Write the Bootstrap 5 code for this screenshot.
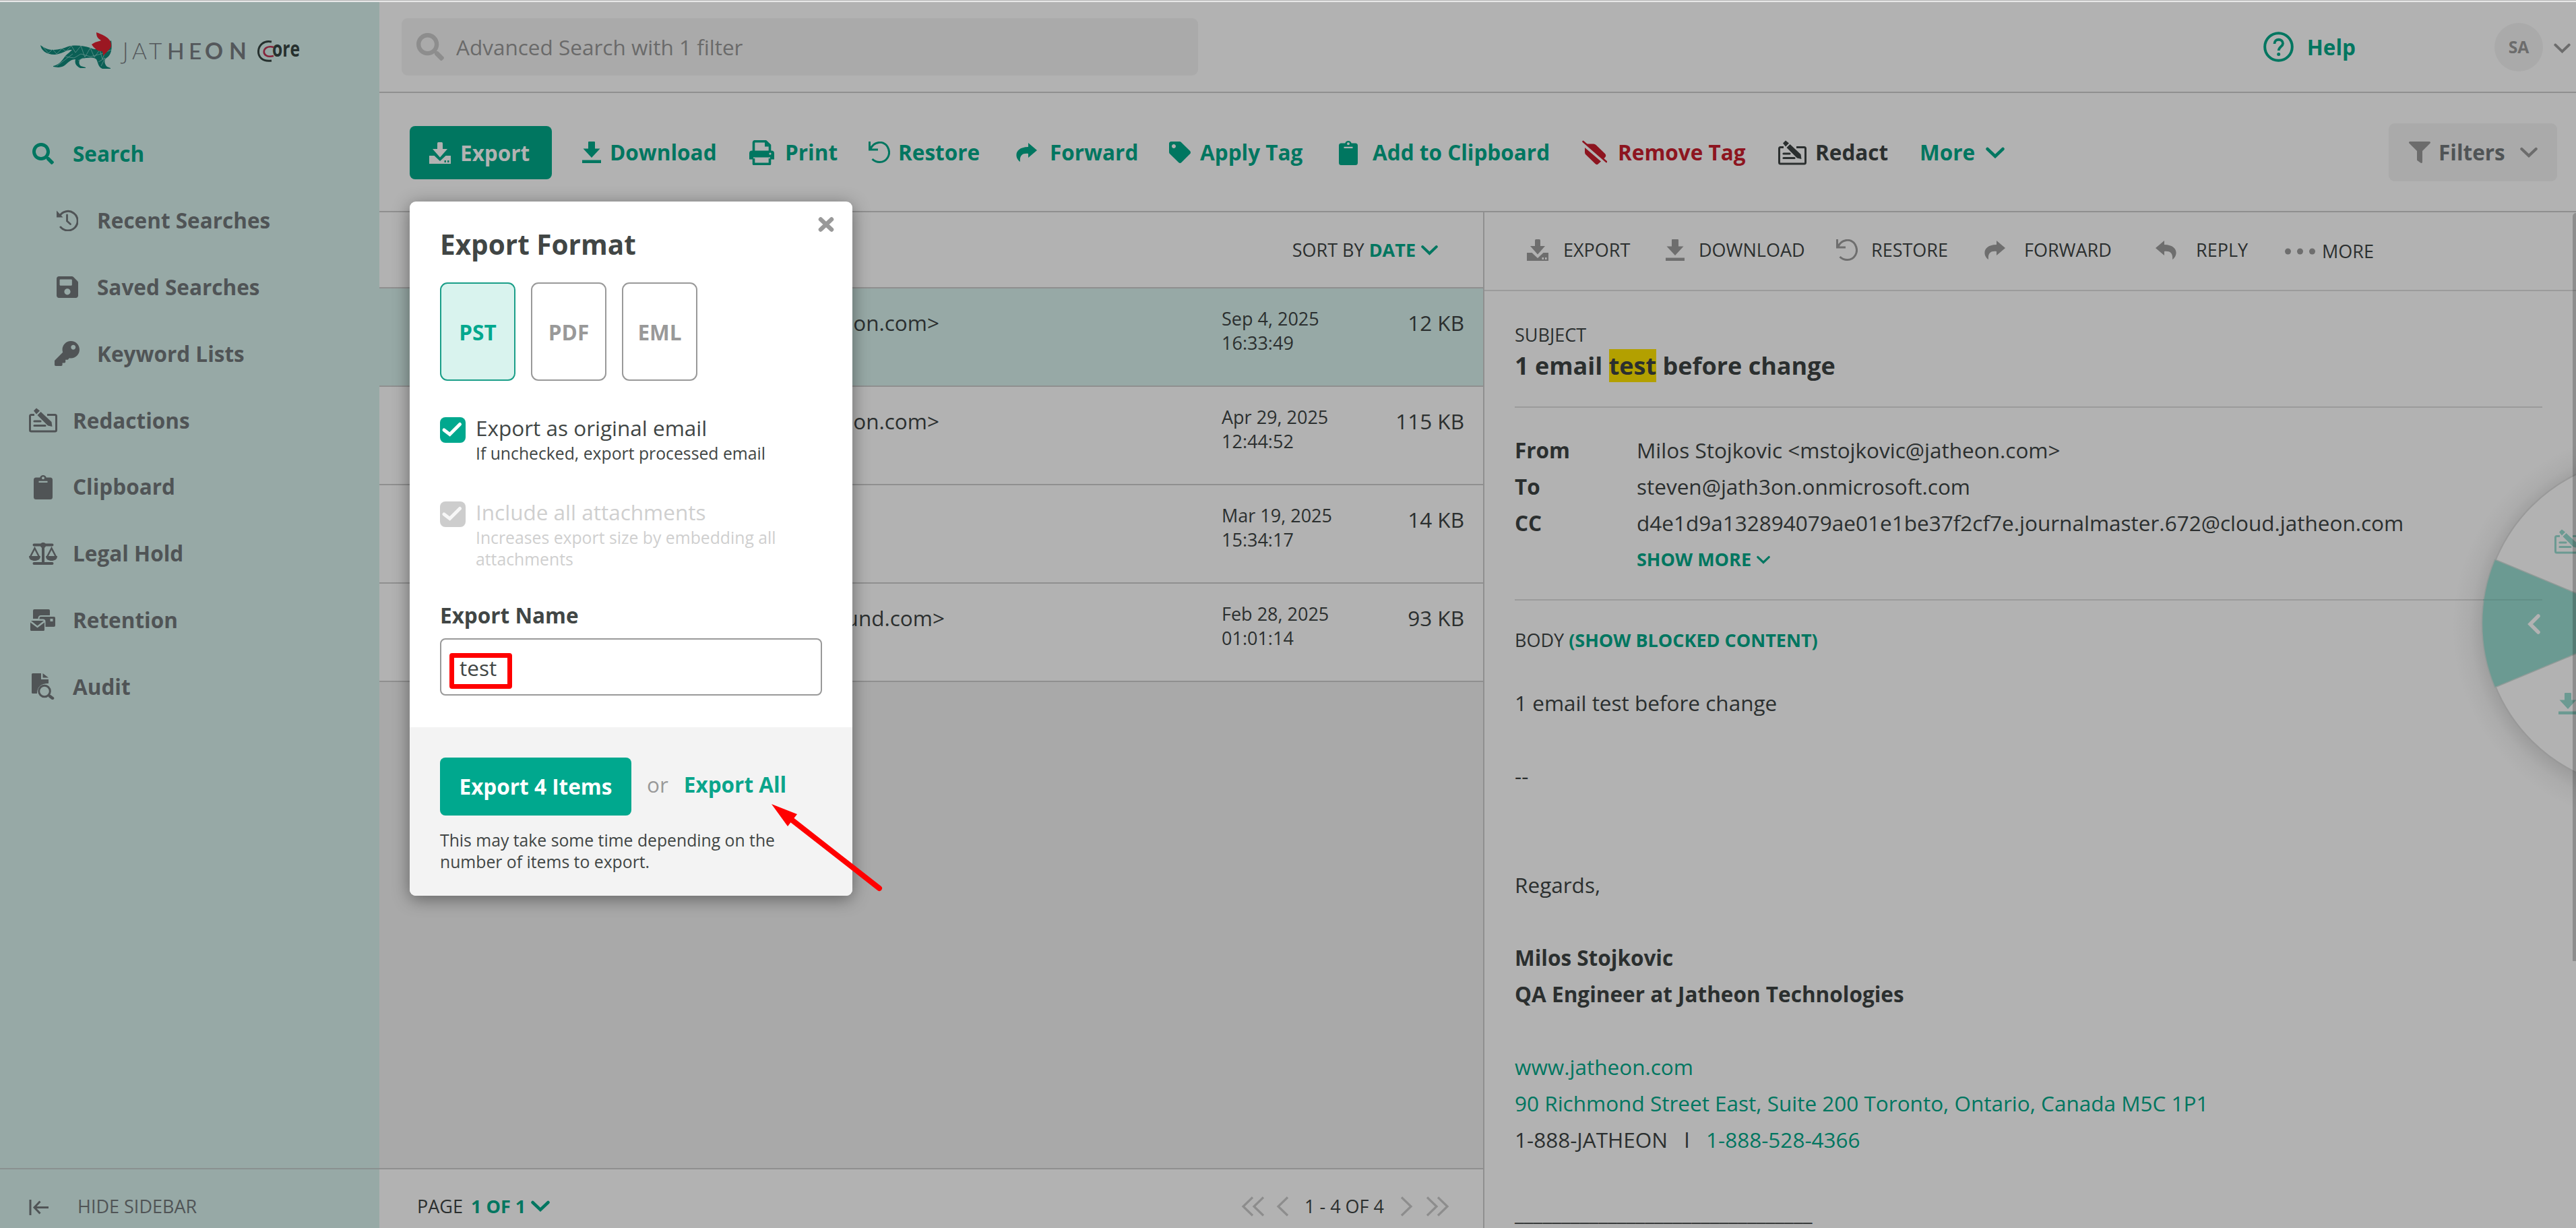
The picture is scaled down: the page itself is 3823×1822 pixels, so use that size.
<!DOCTYPE html>
<html lang="en">
<head>
<meta charset="utf-8">
<title>Jatheon Core</title>
<link href="https://cdn.jsdelivr.net/npm/bootstrap@5.3.0/dist/css/bootstrap.min.css" rel="stylesheet">
<style>
:root{--ink:#2b2f2f;--grn:#007660;--mut:#505456;--line:#8f8f8f;--pane:#b2b2b2;--sage:#97a9a6}
body{width:3823px;height:1822px;overflow:hidden;background:var(--pane);font-family:"Open Sans",sans-serif;font-size:31.5px;line-height:40px;color:var(--ink)}
svg{display:block;flex:none;overflow:visible}
.semi{font-weight:700}.grn{color:var(--grn)}.sm27{font-size:27px;line-height:36px}
.strip{height:3px;background:#c8c8c8;border-bottom:1px solid #fff}
.shell{height:1819px}
/* sidebar */
.side{width:563px;background:var(--sage);color:var(--mut);font-weight:700}
.logo-box{height:176px}
.side-item{height:98.8px;padding-left:43px}
.side-item.sub{padding-left:79px}
.side-item span{white-space:nowrap}
.ico-box{width:41px;margin-right:24px;display:flex;justify-content:center}
.side-item.sel{color:var(--grn)}
.side-foot{height:89px;border-top:2px solid #8a9190;padding:37px 0 0 43px;font-weight:400}
.side-foot svg{margin-right:43px}
/* header */
.topbar{height:135px;flex:none;border-bottom:2px solid var(--line)}
.search-field{width:1182px;height:85px;margin-left:33px;border-radius:9px;background:#aaa;color:#6a6a6a;padding-left:22px}
.search-field svg{margin-right:18px;color:#8d8d8d}
.help{margin-right:206px}
.help svg{margin-right:20px}
.avatar{width:72px;height:72px;border-radius:50%;background:#aaa;color:#6c6c6c;font-size:24.75px;margin-right:16px}
.tools{height:177px;flex:none;border-bottom:2px solid var(--line);padding:1px 28px 0 45px}
.btn-dim{width:211px;height:79px;background:var(--grn);color:#b2b2b2;border:0;border-radius:8px;padding:2px 0 0 29px;font-size:31.5px;font-weight:700;line-height:40px;margin-right:45px}
.btn-dim svg{margin-right:14px}
.tool{height:79px;white-space:nowrap}
.tool svg,.act svg{margin-right:auto}
.tool .slot,.act .slot{display:flex;flex:none}
.w-dl{width:248px}.w-dl .slot{width:41px}
.w-pr{width:177px}.w-pr .slot{width:53px}
.w-re{width:218px}.w-re .slot{width:44px}
.w-fw{width:228px}.w-fw .slot{width:51px}
.w-tg{width:252px}.w-tg .slot{width:46px}
.w-cl{width:361px}.w-cl .slot{width:50px}
.w-rm{width:291px;color:#8d1520}.w-rm .slot{width:53px}
.w-rd{width:210px;color:var(--ink)}.w-rd .slot{width:55px}
.filters{width:250px;height:86px;border-radius:9px;background:#aaa;color:#505456;padding-left:30px}
.filters svg{color:#6c6c6c}
.filters span{margin:0 22px 0 12px}
/* message list */
.split{min-height:0;overflow:hidden}
.list-col{width:1640px;border-right:2px solid var(--line);background:#a9a9a9}
.list-head{height:113px;flex:none;border-bottom:2px solid var(--line);background:var(--pane);padding-right:67px}
.msg{height:146px;flex:none;border-bottom:2px solid var(--line);background:var(--pane);padding:27px 28px 0 204px}
.msg.on{background:var(--sage)}
.msg .who{width:1046px;line-height:47px;white-space:nowrap}
.msg .who div{width:627px;text-align:right}
.msg .who .wide{width:635px}
.msg .kb{line-height:47px}
.list-foot{height:89px;flex:none;border-top:2px solid var(--line);background:var(--pane);padding:37px 51px 0 56px}
.pager{color:#8d8d8d}
.pager span{color:var(--ink)}
/* message detail */
.acts{height:117px;border-bottom:2px solid #9b9b9b;padding:0 0 4px 63px}
.act{height:36px;white-space:nowrap}
.act svg{color:#6e6e6e}
.a1{width:206px}.a1 .slot{width:54px}
.a2{width:253px}.a2 .slot{width:49px}
.a3{width:219px}.a3 .slot{width:52px}
.a4{width:255px}.a4 .slot{width:60px}
.a5{width:192px}.a5 .slot{width:60px}
.a6{padding-top:4px}.a6 .slot{width:55px}
.detail{padding:47px 50px 0 45px}
.subject{font-size:36px;line-height:49px;margin-top:3px;margin-bottom:36px}
.subject span{background:#b3a000}
.rule{height:2px;background:#9b9b9b}
.meta{line-height:54px;margin-top:36px;margin-bottom:32px}
.meta dt{width:181px;font-weight:700}
.meta .more-row{height:54px}
.body-lab{margin-top:41px}
.mail{line-height:54px;margin-top:48px;white-space:pre}
.mail a{color:var(--grn);text-decoration:none}
.scroller{right:0;top:316px;width:5px;height:1110px;background:rgba(0,0,0,.2);border-radius:5px 0 0 0}
.radial{left:3634px;top:628px}
/* export dialog */
.dlg{left:608px;top:299px;width:657px;height:1030px;border:0;border-radius:9px;background:#fff;color:#414645;box-shadow:0 5px 26px rgba(0,0,0,.42);overflow:hidden}
.dlg-main{padding:37px 45px 0;height:780px}
.dlg h2{font-size:40.5px;line-height:54px;font-weight:700;margin:0 0 29px}
.dlg-x{left:606px;top:23px;color:#999}
.formats{gap:23px}
.fmt{width:112px;height:146px;border:2px solid #999;border-radius:11px;color:#999;font-weight:700;padding-top:2px}
.fmt.on{border-color:#1a9e88;background:#d9f3ee;color:#00a88e}
.chk{width:38px;height:38px;border-radius:8px;background:#00a88e;margin-right:15px}
.opt{margin-top:54px}
.opt-txt{margin-top:-4px;white-space:nowrap}
.opt-txt div+div{font-size:24.75px;line-height:32px;margin-top:2px}
.opt.off{color:#cfcfcf;margin-top:55px}
.opt.off .chk{background:#cdcdcd}
.name-lab{margin:47px 0 14px}
.dlg .form-control{height:85px;width:567px;border:2px solid #999;border-radius:8px;font-size:31.5px;line-height:40px;padding:2px 27px 0;color:#414645;font-family:"Open Sans",sans-serif}
.dlg-foot{height:250px;background:#f3f3f3;padding:45px 45px 0}
.btn-go{width:284px;height:86px;background:#00a88e;color:#fff;border:0;border-radius:8px;font-size:31.5px;font-weight:700;line-height:40px;padding:0}
.or{margin:0 23px 7px;color:#999}
.all{color:#0aa58b;margin-bottom:7px}
.note{font-size:24.75px;line-height:32px;margin-top:21px;white-space:nowrap}
.mark-box{left:667px;top:969px;width:93px;height:53px;border:7.5px solid #f00;border-radius:4px}
.arrow{left:1140px;top:1188px}
</style>
<script src="https://cdn.jsdelivr.net/npm/bootstrap@5.3.0/dist/js/bootstrap.bundle.min.js"></script>
</head>
<body>
<svg width="0" height="0" class="position-absolute" aria-hidden="true">
<symbol id="search" viewBox="0 0 512 512"><path fill="currentColor" d="M505 442.7L405.3 343c-4.5-4.5-10.6-7-17-7H372c27.600-35.300 44-79.700 44-128C416 93.100 322.900 0 208 0S0 93.100 0 208s93.100 208 208 208c48.300 0 92.700-16.400 128-44v16.300c0 6.400 2.500 12.500 7 17l99.700 99.700c9.400 9.400 24.600 9.400 33.900 0l28.300-28.300c9.400-9.400 9.400-24.600.1-34zM208 336c-70.700 0-128-57.200-128-128 0-70.700 57.200-128 128-128 70.700 0 128 57.200 128 128 0 70.700-57.200 128-128 128z"/></symbol>
<symbol id="history" viewBox="0 0 32 32"><path d="M4.500 9.500A14.300 14.300 0 1 1 6 26" fill="none" stroke="currentColor" stroke-width="3" stroke-linecap="round"/><path d="M0 1.500V11.500H9.500Z" fill="currentColor"/><path d="M15.500 8V17l5 4.500" fill="none" stroke="currentColor" stroke-width="2.800" stroke-linecap="round"/></symbol>
<symbol id="save" viewBox="0 32 448 448"><path fill="currentColor" d="M433.941 129.941l-83.882-83.882A48 48 0 0 0 316.118 32H48C21.490 32 0 53.490 0 80v352c0 26.510 21.490 48 48 48h352c26.510 0 48-21.490 48-48V163.882a48 48 0 0 0-14.059-33.941zM224 416c-35.346 0-64-28.654-64-64 0-35.346 28.654-64 64-64s64 28.654 64 64c0 35.346-28.654 64-64 64zm96-304.520V212c0 6.627-5.373 12-12 12H76c-6.627 0-12-5.373-12-12V108c0-6.627 5.373-12 12-12h228.520c3.183 0 6.235 1.264 8.485 3.515l3.480 3.480A11.996 11.996 0 0 1 320 111.480z"/></symbol>
<symbol id="key" viewBox="0 0 512 512"><path fill="currentColor" d="M512 176.001C512 273.203 433.202 352 336 352c-11.220 0-22.190-1.062-32.827-3.069l-24.012 27.014A23.999 23.999 0 0 1 261.223 384H224v40c0 13.255-10.745 24-24 24h-40v40c0 13.255-10.745 24-24 24H24c-13.255 0-24-10.745-24-24v-78.059c0-6.365 2.529-12.470 7.029-16.971l161.802-161.802C163.108 213.814 160 195.271 160 176 160 78.798 238.797.001 335.999 0 433.488-.001 512 78.511 512 176.001zM336 128c0 26.510 21.490 48 48 48s48-21.490 48-48-21.490-48-48-48-48 21.490-48 48z"/></symbol>
<symbol id="redact" viewBox="0 0 42 37"><path d="M8 10.500H3.500a2 2 0 0 0-2 2V33a2 2 0 0 0 2 2H38.500a2 2 0 0 0 2-2V12.500a2 2 0 0 0-2-2H27" fill="none" stroke="currentColor" stroke-width="3"/><path d="M8 20H17M8 26.500H24" stroke="currentColor" stroke-width="3.200" stroke-linecap="round"/><path d="M7 4.500L11 .5L16 4.500L11 9.500ZM12.500 11L17.500 6L33.500 21L34.500 28L28 26.500Z" fill="currentColor"/></symbol>
<symbol id="clip" viewBox="0 0 28 37"><path fill="currentColor" fill-rule="evenodd" d="M3.500 4.500H9.300a4.900 4.900 0 0 1 9.400 0H24.500A3.500 3.500 0 0 1 28 8V33.500A3.500 3.500 0 0 1 24.500 37H3.500A3.500 3.500 0 0 1 0 33.500V8A3.500 3.500 0 0 1 3.500 4.500ZM14 3.200a2 2 0 1 0 0 4a2 2 0 0 0 0-4ZM7.500 9.800V12H20.500V9.800Z"/></symbol>
<symbol id="scale" viewBox="0 0 42 33"><path d="M7.500 3.500H34.500M7.500 31H34.500M21 3V31" stroke="currentColor" stroke-width="4" stroke-linecap="round"/><circle cx="21" cy="4" r="4.200" fill="currentColor"/><path d="M2 21L8.500 8.500L15 21M27 21L33.500 8.500L40 21" fill="none" stroke="currentColor" stroke-width="2.500"/><path d="M0 20H17C17 25 13 27 8.500 27S0 25 0 20ZM25 20H42C42 25 38 27 33.500 27S25 25 25 20Z" fill="currentColor"/></symbol>
<symbol id="retain" viewBox="0 0 37 32"><path fill="currentColor" fill-rule="evenodd" d="M6 0H27a2 2 0 0 1 2 2V9H16Q11.500 9 11.500 14H4V2A2 2 0 0 1 6 0ZM15.500 11H35a2 2 0 0 1 2 2V24a2 2 0 0 1-2 2H22.500V18Q22.500 14.500 18.500 14.500H13.500V13A2 2 0 0 1 15.500 11ZM29.500 14V18H33.500V14ZM1 17H20L10.500 24.500ZM0 19.500L10.500 27.500L21 19.500V30.500A1.500 1.500 0 0 1 19.500 32H1.500A1.500 1.500 0 0 1 0 30.500Z"/></symbol>
<symbol id="audit" viewBox="0 0 34 39"><path fill="currentColor" d="M1.500 0H14V9H25V15Q8 15 8 30H1.500A1.500 1.500 0 0 1 0 28.500V1.500A1.500 1.500 0 0 1 1.500 0ZM16.500 0L25 6.500H16.500Z"/><circle cx="19" cy="26.500" r="8.300" fill="none" stroke="currentColor" stroke-width="3"/><path d="M27 34L31 37" stroke="currentColor" stroke-width="4.500" stroke-linecap="round"/></symbol>
<symbol id="dl" viewBox="0 0 28 32"><path fill="currentColor" d="M10 0H18Q19 0 19 1V10.500H26.500L14 24L1.500 10.500H9V1Q9 0 10 0ZM0 27.500H28V32H0Z"/></symbol>
<symbol id="exp" viewBox="0 0 32 32"><path fill="currentColor" fill-rule="evenodd" d="M13.500 0H18.500Q20 0 20 2V10H27L16 22.500L5 10H12V2Q12 0 13.500 0ZM0 20H7.500L16 28L24.500 20H32V32H0ZM22.500 27V30H25V27ZM27 27V30H29.500V27Z"/></symbol>
<symbol id="print" viewBox="0 0 37 37"><path d="M6.500 18V3.500A2 2 0 0 1 8.500 1.700H24.500L30.500 7.500V18M6.500 27V35.300H30.500V27" fill="none" stroke="currentColor" stroke-width="3.600" stroke-linejoin="round"/><path d="M23 2V9.500H30" fill="currentColor"/><path fill="currentColor" fill-rule="evenodd" d="M4 15.500H33A4 4 0 0 1 37 19.500V28.500H31V25.500H6V28.500H0V19.500A4 4 0 0 1 4 15.500ZM31 18.500A1.600 1.600 0 1 0 31 21.700A1.600 1.600 0 1 0 31 18.500Z"/></symbol>
<symbol id="undo" viewBox="0 0 32 32"><path d="M1.500 0V12H14M2.500 11.500C8 -1 22 -1.500 28 7.500C35 20 26 30.500 16.500 30.500C11 30.500 8 28.500 5.500 26" fill="none" stroke="currentColor" stroke-width="3"/></symbol>
<symbol id="fwd" viewBox="0 0 32 28"><path fill="currentColor" d="M19 0L32 11L19 22V16C10 15 6 19 7 28C-1 23 -3 6.500 19 6Z"/></symbol>
<symbol id="tag" viewBox="0 0 512 512"><path fill="currentColor" d="M0 252.118V48C0 21.490 21.490 0 48 0h204.118a48 48 0 0 1 33.941 14.059l211.882 211.882c18.745 18.745 18.745 49.137 0 67.882L293.823 497.941c-18.745 18.745-49.137 18.745-67.882 0L14.059 286.059A48 48 0 0 1 0 252.118zM112 64c-26.510 0-48 21.490-48 48s21.490 48 48 48 48-21.490 48-48-21.490-48-48-48z"/></symbol>
<symbol id="untag" viewBox="0 0 37 37"><path fill="currentColor" d="M6 5.500H17Q19 5.500 20.500 7L34 20Q36.500 23 34 25.500L31.500 28L6.500 6ZM4 11L28 31.500L23.500 35.500Q21.500 37 19.500 35L5.500 21.500Q4 20 4 18Z"/><path d="M1.500 2L36 32" stroke="currentColor" stroke-width="2.600" stroke-linecap="round"/></symbol>
<symbol id="filter" viewBox="0 0 512 512"><path fill="currentColor" d="M487.976 0H24.028C2.710 0-8.047 25.866 7.058 40.971L192 225.941V432c0 7.831 3.821 15.170 10.237 19.662l80 55.980C298.020 518.690 320 507.493 320 487.980V225.941l184.947-184.970C520.021 25.896 509.338 0 487.976 0z"/></symbol>
<symbol id="down" viewBox="0 0 28 17"><path d="M2.500 3L14 14L25.500 3" fill="none" stroke="currentColor" stroke-width="4.500" stroke-linecap="round"/></symbol>
<symbol id="tick" viewBox="0 0 38 38"><path d="M6 19L14.500 25.500L29.500 10.500" fill="none" stroke="#fff" stroke-width="5" stroke-linecap="round"/></symbol>
</svg>

<div class="strip"></div>
<div class="shell d-flex">
  <aside class="side d-flex flex-column flex-shrink-0">
    <div class="logo-box">
      <svg width="563" height="176" viewBox="0 3 563 176">
        <path fill="#0b5f55" d="M60 67C74 78 88 74 101 69C112 66 124 68 134 71C144 76 152 70 157 66L165 60C167 72 165 82 158 86C153 89 156 97 159 99L164 101L164 102H152C145 99 146 93 143 88C138 84 129 86 121 87C116 89 117 96 120 98L127 100V101H119C111 97 111 92 112 88C105 88 102 92 96 97C90 101 84 100 79 99V98C88 96 92 90 97 83C101 79 104 77 107 74C99 73 93 80 81 81C68 81 61 74 60 67Z"/>
        <path fill="none" stroke="#6f9a93" stroke-width=".7" d="M64 70L72 79L78 73L84 80L92 72L98 76L106 68L112 78L120 68L126 85L134 71L140 85L148 74L152 88L160 66M97 84L110 86L120 80L134 84L150 80L165 74M84 98L100 86L108 80M116 90L124 86M146 92L156 86L150 98"/>
        <path fill="#9b1722" d="M143 48C154 52 166 57 165 68C165 70 164 72 153 83C153 78 152 75 150 76C145 76 139 71 136 66C141 62 145 62 150 60C145 57 143 54 143 48Z"/>
        <g fill="#54585b" font-family="Lato" font-size="33.500"><text y="88"><tspan x="182" font-family="Open Sans" font-weight="300" font-size="34">J</tspan><tspan x="196" font-weight="300">A</tspan><tspan x="221" font-weight="300">T</tspan><tspan x="248" font-weight="500">H</tspan><tspan x="280" font-weight="500">E</tspan><tspan x="304" font-weight="700">O</tspan><tspan x="340" font-weight="700">N</tspan></text></g>
        <path d="M403 62C379 57 375 94 403 90" fill="none" stroke="#26302e" stroke-width="3"/>
        <path d="M406 70C388 65 386 88 406 83" fill="none" stroke="#86243a" stroke-width="2.600"/>
        <text x="404" y="84" fill="#26302e" font-family="Open Sans" font-size="32" textLength="41" lengthAdjust="spacingAndGlyphs">ore</text>
      </svg>
    </div>
    <nav class="flex-grow-1">
      <div class="side-item sel d-flex align-items-center"><div class="ico-box"><svg width="32" height="32"><use href="#search"/></svg></div><span>Search</span></div>
      <div class="side-item sub d-flex align-items-center"><div class="ico-box"><svg width="32" height="32"><use href="#history"/></svg></div><span>Recent Searches</span></div>
      <div class="side-item sub d-flex align-items-center"><div class="ico-box"><svg width="32" height="32"><use href="#save"/></svg></div><span>Saved Searches</span></div>
      <div class="side-item sub d-flex align-items-center"><div class="ico-box"><svg width="37" height="37"><use href="#key"/></svg></div><span>Keyword Lists</span></div>
      <div class="side-item d-flex align-items-center"><div class="ico-box"><svg width="42" height="37"><use href="#redact"/></svg></div><span>Redactions</span></div>
      <div class="side-item d-flex align-items-center"><div class="ico-box"><svg width="28" height="37"><use href="#clip"/></svg></div><span>Clipboard</span></div>
      <div class="side-item d-flex align-items-center"><div class="ico-box"><svg width="42" height="33"><use href="#scale"/></svg></div><span>Legal Hold</span></div>
      <div class="side-item d-flex align-items-center"><div class="ico-box"><svg width="37" height="32"><use href="#retain"/></svg></div><span>Retention</span></div>
      <div class="side-item d-flex align-items-center"><div class="ico-box"><svg width="34" height="39"><use href="#audit"/></svg></div><span>Audit</span></div>
    </nav>
    <div class="side-foot sm27 d-flex align-items-start"><svg class="mt-2" width="29" height="23" viewBox="0 0 29 23"><path d="M2 0V23M8 11.500H29M16.500 2.500L8 11.500L16.500 20.500" fill="none" stroke="currentColor" stroke-width="3"/></svg><span>HIDE SIDEBAR</span></div>
  </aside>

  <div class="flex-grow-1 d-flex flex-column">
    <header class="topbar d-flex align-items-center">
      <div class="search-field d-flex align-items-center"><svg width="41" height="41"><use href="#search"/></svg>Advanced Search with 1 filter</div>
      <div class="help ms-auto d-flex align-items-center grn semi"><svg width="45" height="45" viewBox="0 0 45 45"><circle cx="22.500" cy="22.500" r="20.300" fill="none" stroke="currentColor" stroke-width="4"/><path d="M16.500 18C16.500 9.500 29 10 29 17.500C29 22 23 22.500 22.800 28" fill="none" stroke="currentColor" stroke-width="3.800"/><circle cx="22.700" cy="33.500" r="2.500" fill="currentColor"/></svg>Help</div>
      <div class="avatar d-flex align-items-center justify-content-center semi">SA</div>
      <svg class="me-2 mt-1" width="25" height="15" color="#6c6c6c"><use href="#down"/></svg>
    </header>

    <div class="tools d-flex align-items-center semi grn">
      <button class="btn btn-dim d-flex align-items-center"><svg width="32" height="32"><use href="#exp"/></svg>Export</button>
      <div class="tool w-dl d-flex align-items-center"><div class="slot"><svg width="28" height="32"><use href="#dl"/></svg></div>Download</div>
      <div class="tool w-pr d-flex align-items-center"><div class="slot"><svg width="37" height="37"><use href="#print"/></svg></div>Print</div>
      <div class="tool w-re d-flex align-items-center"><div class="slot"><svg width="32" height="32"><use href="#undo"/></svg></div>Restore</div>
      <div class="tool w-fw d-flex align-items-center"><div class="slot"><svg width="32" height="28"><use href="#fwd"/></svg></div>Forward</div>
      <div class="tool w-tg d-flex align-items-center"><div class="slot"><svg width="32" height="32"><use href="#tag"/></svg></div>Apply Tag</div>
      <div class="tool w-cl d-flex align-items-center"><div class="slot"><svg width="28" height="37"><use href="#clip"/></svg></div>Add to Clipboard</div>
      <div class="tool w-rm d-flex align-items-center"><div class="slot"><svg width="37" height="37"><use href="#untag"/></svg></div>Remove Tag</div>
      <div class="tool w-rd d-flex align-items-center"><div class="slot"><svg width="42" height="37"><use href="#redact"/></svg></div>Redact</div>
      <div class="tool d-flex align-items-center gap-3">More<svg width="28" height="17"><use href="#down"/></svg></div>
      <div class="filters ms-auto d-flex align-items-center"><svg width="32" height="32"><use href="#filter"/></svg><span>Filters</span><svg width="26" height="16"><use href="#down"/></svg></div>
    </div>

    <div class="split d-flex flex-grow-1">
      <section class="list-col d-flex flex-column flex-shrink-0">
        <div class="list-head sm27 d-flex align-items-center justify-content-end"><span>SORT BY <span class="grn semi">DATE</span></span><svg class="ms-2 grn" width="25" height="16"><use href="#down"/></svg></div>
        <div class="msg on d-flex"><div class="who"><div>eon.com&gt;</div></div><div class="sm27">Sep 4, 2025<br>16:33:49</div><div class="kb ms-auto">12 KB</div></div>
        <div class="msg d-flex"><div class="who"><div>eon.com&gt;</div></div><div class="sm27">Apr 29, 2025<br>12:44:52</div><div class="kb ms-auto">115 KB</div></div>
        <div class="msg d-flex"><div class="who"></div><div class="sm27">Mar 19, 2025<br>15:34:17</div><div class="kb ms-auto">14 KB</div></div>
        <div class="msg d-flex"><div class="who"><div class="wide">und.com&gt;</div></div><div class="sm27">Feb 28, 2025<br>01:01:14</div><div class="kb ms-auto">93 KB</div></div>
        <div class="list-foot mt-auto sm27 d-flex align-items-start">
          <span class="me-2">PAGE</span><span class="grn semi ms-1">1 OF 1</span><svg class="grn mt-2 ms-2" width="28" height="19"><use href="#down"/></svg>
          <div class="pager ms-auto d-flex align-items-center">
            <svg width="69" height="30" viewBox="0 0 69 30"><path d="M16 1.500L2 15L16 28.500M32 1.500L18 15L32 28.500M68 1.500L54 15L68 28.500" fill="none" stroke="currentColor" stroke-width="3.200"/></svg>
            <span class="px-4 text-nowrap">1 - 4 OF 4</span>
            <svg width="72" height="30" viewBox="0 0 72 30"><path d="M2 1.500L16 15L2 28.500M40 1.500L54 15L40 28.500M56 1.500L70 15L56 28.500" fill="none" stroke="currentColor" stroke-width="3.200"/></svg>
          </div>
        </div>
      </section>

      <section class="flex-grow-1">
        <div class="acts sm27 d-flex align-items-center">
          <div class="act a1 d-flex align-items-center"><div class="slot"><svg width="32" height="32"><use href="#exp"/></svg></div>EXPORT</div>
          <div class="act a2 d-flex align-items-center"><div class="slot"><svg width="28" height="32"><use href="#dl"/></svg></div>DOWNLOAD</div>
          <div class="act a3 d-flex align-items-center"><div class="slot"><svg width="32" height="32"><use href="#undo"/></svg></div>RESTORE</div>
          <div class="act a4 d-flex align-items-center"><div class="slot"><svg width="32" height="28"><use href="#fwd"/></svg></div>FORWARD</div>
          <div class="act a5 d-flex align-items-center"><div class="slot"><svg width="32" height="28"><g transform="translate(32 0) scale(-1 1)"><use href="#fwd" width="32" height="28"/></g></svg></div>REPLY</div>
          <div class="act a6 d-flex align-items-center"><div class="slot"><svg width="45" height="10" viewBox="0 0 45 10"><g fill="currentColor"><circle cx="4.500" cy="5" r="4.500"/><circle cx="22.500" cy="5" r="4.500"/><circle cx="40.500" cy="5" r="4.500"/></g></svg></div>MORE</div>
        </div>
        <div class="detail">
          <div class="sm27">SUBJECT</div>
          <div class="subject semi">1 email <span>test</span> before change</div>
          <div class="rule"></div>
          <dl class="meta">
            <div class="d-flex"><dt>From</dt><dd class="m-0">Milos Stojkovic &lt;mstojkovic@jatheon.com&gt;</dd></div>
            <div class="d-flex"><dt>To</dt><dd class="m-0">steven@jath3on.onmicrosoft.com</dd></div>
            <div class="d-flex"><dt>CC</dt><dd class="m-0">d4e1d9a132894079ae01e1be37f2cf7e.journalmaster.672@cloud.jatheon.com</dd></div>
            <div class="more-row d-flex align-items-center grn semi"><dt></dt><dd class="m-0 sm27">SHOW MORE</dd><svg class="ms-2" width="20" height="13"><use href="#down"/></svg></div>
          </dl>
          <div class="rule"></div>
          <div class="body-lab sm27">BODY <span class="grn semi">(SHOW BLOCKED CONTENT)</span></div>
<div class="mail">1 email test before change

--


Regards,

<span class="semi">Milos Stojkovic</span>
<span class="semi">QA Engineer at Jatheon Technologies</span>

<a href="#">www.jatheon.com</a>
<a href="#">90 Richmond Street East, Suite 200 Toronto, Ontario, Canada M5C 1P1</a>
1-888-JATHEON   l   <a href="#">1-888-528-4366</a>

________________________________</div>
        </div>
      </section>
    </div>
  </div>
</div>

<svg class="radial position-absolute" width="189" height="594" viewBox="3634 628 189 594">
  <defs><radialGradient id="halo" gradientUnits="userSpaceOnUse" cx="3931" cy="930" r="292"><stop offset=".83" stop-color="#000" stop-opacity=".12"/><stop offset=".91" stop-color="#000" stop-opacity=".035"/><stop offset="1" stop-color="#000" stop-opacity="0"/></radialGradient><clipPath id="edge"><rect x="3634" y="600" width="189" height="660"/></clipPath></defs>
  <g clip-path="url(#edge)"><circle cx="3931" cy="930" r="292" fill="url(#halo)"/>
  <circle cx="3931" cy="925" r="246" fill="#b2b2b2" stroke="#999" stroke-width="2"/>
  <path d="M3931 925L3702.600 830A247 247 0 0 0 3702.600 1020Z" fill="#6b9a92" stroke="#919b98" stroke-width="1.500"/>
  <path d="M3685 890H3773" stroke="#5f8b83" stroke-width="1.500"/>
  <path d="M3767 914L3755 926L3767 938" fill="none" stroke="#b2b2b2" stroke-width="5.500" stroke-linecap="round"/>
  <g color="#6b9a92"><use href="#redact" x="3791" y="785" width="42" height="37"/><use href="#dl" x="3797" y="1028" width="28" height="32"/></g></g>
</svg>
<div class="scroller position-absolute"></div>

<div class="dlg card position-absolute">
  <svg class="dlg-x position-absolute" width="24" height="22" viewBox="0 0 24 22"><path d="M4 3.500L20 18.500M20 3.500L4 18.500" stroke="currentColor" stroke-width="6.500" stroke-linecap="round"/></svg>
  <div class="dlg-main">
    <h2>Export Format</h2>
    <div class="formats d-flex">
      <div class="fmt on d-flex align-items-center justify-content-center">PST</div>
      <div class="fmt d-flex align-items-center justify-content-center">PDF</div>
      <div class="fmt d-flex align-items-center justify-content-center">EML</div>
    </div>
    <div class="opt d-flex align-items-start"><div class="chk"><svg width="38" height="38"><use href="#tick"/></svg></div><div class="opt-txt"><div>Export as original email</div><div>If unchecked, export processed email</div></div></div>
    <div class="opt off d-flex align-items-start"><div class="chk"><svg width="38" height="38" opacity=".85"><use href="#tick"/></svg></div><div class="opt-txt"><div>Include all attachments</div><div>Increases export size by embedding all<br>attachments</div></div></div>
    <div class="name-lab semi">Export Name</div>
    <input class="form-control" value="test">
  </div>
  <div class="dlg-foot">
    <div class="d-flex align-items-center"><button class="btn btn-go">Export 4 Items</button><span class="or">or</span><span class="all semi">Export All</span></div>
    <div class="note">This may take some time depending on the<br>number of items to export.</div>
  </div>
</div>
<div class="mark-box position-absolute"></div>
<svg class="arrow position-absolute" width="175" height="140" viewBox="1140 1188 175 140"><path d="M1305 1318L1172 1214" stroke="#f00" stroke-width="8" stroke-linecap="round"/><path d="M1145 1193L1183 1208L1169 1226Z" fill="#f00"/></svg>
</body>
</html>
